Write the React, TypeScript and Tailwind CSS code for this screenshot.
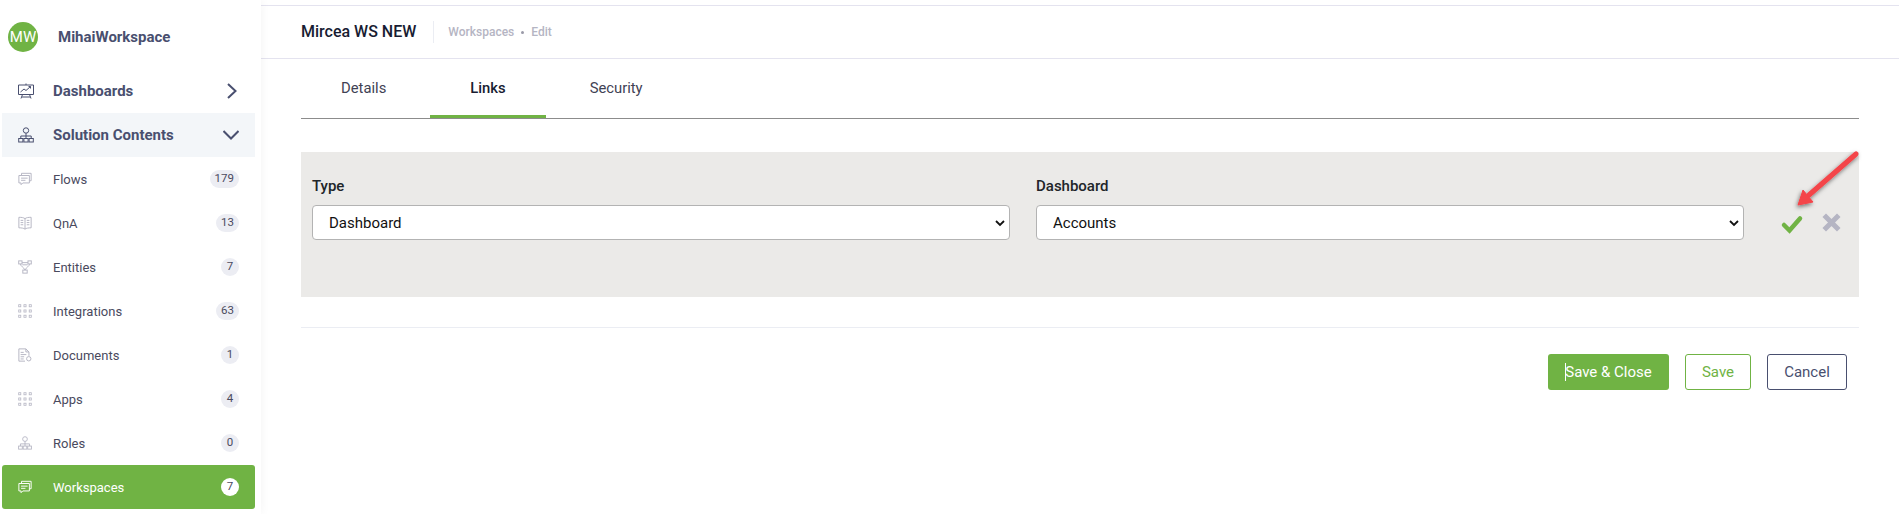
const S = 14;

function Msgs({ c }: { c: string }) {
  return (
    <svg width={S} height={S} viewBox="0 0 16 16" fill="none" stroke={c} strokeWidth="1.1">
      <path d="M4 3.5V1.5h11v8.5H13" />
      <path d="M1 4h12v8.5H5.5L3.5 14.5V12.5H1z" />
      <path d="M3.5 7h7.5M3.5 9.5h5" />
    </svg>
  );
}
function Book() {
  return (
    <svg width={S} height={S} viewBox="0 0 16 16" fill="none" stroke="#b5b5c3" strokeWidth="1.1">
      <path d="M8 3C6.5 1.8 4 1.5 1 1.5v12c3 0 5.500.4 7 1.500 1.500-1.100 4-1.500 7-1.500v-12C12 1.500 9.500 1.800 8 3zM8 3V15" />
      <path d="M3 5h3M3 7.500h3M3 10h3M10 5h3M10 7.500h3M10 10h3" />
    </svg>
  );
}
function Ent() {
  return (
    <svg width={S} height={S} viewBox="0 0 16 16" fill="none" stroke="#b5b5c3" strokeWidth="1.1">
      <rect x="0.8" y="1" width="3.8" height="3.500" />
      <rect x="11.400" y="1" width="3.800" height="3.500" />
      <rect x="5.500" y="11.500" width="5" height="3.500" />
      <path d="M4.600 3h6.800M2.800 4.500C3 7.500 6.500 8 8 11.500M13.200 4.500C13 7.500 9.500 8 8 11.500M5 5.500h6" />
    </svg>
  );
}
function Dots() {
  const p = [2, 8, 14];
  return (
    <svg width={S} height={S} viewBox="0 0 16 16" fill="none" stroke="#b5b5c3" strokeWidth="0.9">
      {p.map((y) => p.map((x) => <rect key={x + "-" + y} x={x - 1.2} y={y - 1.2} width="2.400" height="2.400" />))}
    </svg>
  );
}
function Doc() {
  return (
    <svg width={S} height={S} viewBox="0 0 16 16" fill="none" stroke="#b5b5c3" strokeWidth="1.100">
      <path d="M8 15H1V1h8l3.500 3.500V9" />
      <path d="M9 1v3.500h3.500M3 5h3.500M3 7.500h6.500M3 10h4M3 12.500h3.500" />
      <circle cx="12.300" cy="12.300" r="2.500" />
    </svg>
  );
}
function Tree({ c, w }: { c: string; w: number }) {
  return (
    <svg width={w} height={w} viewBox="0 0 16 16" fill="none" stroke={c} strokeWidth="1">
      <circle cx="8" cy="3.500" r="2.700" />
      <path d="M8 6.200V11.500M2.800 11.500V9h10.400v2.500" />
      <rect x="0.700" y="11.500" width="4.200" height="3.500" />
      <rect x="5.900" y="11.500" width="4.200" height="3.500" />
      <rect x="11.100" y="11.500" width="4.200" height="3.500" />
    </svg>
  );
}
function Board() {
  return (
    <svg width="16" height="16" viewBox="0 0 16 16" fill="none" stroke="#494f6f" strokeWidth="1">
      <path d="M8 .5V2M.5 2h15v9.500H.5zM4.500 11.500 3 15.500M11.500 11.500 13 15.500M4 14h8" />
      <path d="M2.500 9 6 6l2 1.500 4.500-4M10.500 3.500h2v2" />
    </svg>
  );
}

const items = [
  { label: "Flows", count: "179", icon: <Msgs c="#b5b5c3" /> },
  { label: "QnA", count: "13", icon: <Book /> },
  { label: "Entities", count: "7", icon: <Ent /> },
  { label: "Integrations", count: "63", icon: <Dots /> },
  { label: "Documents", count: "1", icon: <Doc /> },
  { label: "Apps", count: "4", icon: <Dots /> },
  { label: "Roles", count: "0", icon: <Tree c="#b5b5c3" w={14} /> },
];

function Badge({ n, active }: { n: string; active?: boolean }) {
  return (
    <span
      className={
        "h-[18px] min-w-[18px] px-[5px] rounded-full flex items-center justify-center text-[11.5px] text-[#4a4a5e] " +
        (active ? "bg-white" : "bg-[#ecedf3]")
      }
    >
      {n}
    </span>
  );
}

function Row({ icon, label, count, active }: { icon: React.ReactNode; label: string; count: string; active?: boolean }) {
  return (
    <div
      className={
        "h-[44px] ml-[2px] w-[253px] flex items-center pl-[16px] pr-[16px] rounded-[3px] " +
        (active ? "bg-[#70b344] text-white" : "text-[#4a4a5e]")
      }
    >
      <span className="w-[35px] flex items-center shrink-0">{icon}</span>
      <span className="flex-1 text-[13px] pt-[1px]">{label}</span>
      <Badge n={count} active={active} />
    </div>
  );
}

function Tab({ label, active }: { label: string; active?: boolean }) {
  return (
    <div
      className={
        "h-[59px] px-[40px] mr-[4px] flex items-center text-[14.8px] border-b-[3px] -mb-[1px] pt-[3px] " +
        (active ? "border-[#70b344] font-medium text-[#181c32]" : "border-transparent text-[#3f4254]")
      }
    >
      {label}
    </div>
  );
}

function Field({ label, value, opts, w }: { label: string; value: string; opts: string[]; w: string }) {
  return (
    <div className={w + " shrink-0"}>
      <div className="text-[15px] font-medium text-[#212529] h-[21px] leading-[21px] mb-[8px]">{label}</div>
      <div className="relative">
        <select
          defaultValue={value}
          className="appearance-none w-full h-[35px] bg-white border border-[#b3b3b3] rounded-[4px] pl-[16px] pr-[4px] pt-[2px] text-[15px] text-[#111] outline-none"
        >
          {opts.map((o) => (
            <option key={o}>{o}</option>
          ))}
        </select>
        <svg className="absolute right-[5px] top-[15px] pointer-events-none" width="10" height="7" viewBox="0 0 10 7" fill="none" stroke="#111" strokeWidth="1.800">
          <path d="M1 1l4 4 4-4" />
        </svg>
      </div>
    </div>
  );
}

export default function App() {
  return (
    <div className="w-[1899px] h-[514px] overflow-hidden flex bg-white font-['Roboto',sans-serif] relative">
      <aside className="w-[261px] shrink-0 bg-white shadow-[0_0_10px_rgba(0,0,0,0.05)] z-10">
        <div className="h-[69px] flex items-start pt-[22px] pl-[8px]">
          <div className="w-[30px] h-[30px] rounded-full bg-[#70b344] text-white text-[15px] flex items-center justify-center">
            MW
          </div>
          <div className="ml-[20px] h-[30px] flex items-center text-[15px] font-bold text-[#494f6f]">MihaiWorkspace</div>
        </div>
        <div className="h-[44px] ml-[2px] w-[253px] flex items-center pl-[16px] pr-[16px] text-[#494f6f]">
          <span className="w-[35px] shrink-0 flex items-center">
            <Board />
          </span>
          <span className="flex-1 text-[15px] font-bold">Dashboards</span>
          <svg width="12" height="16" viewBox="0 0 12 16" fill="none" stroke="#494f6f" strokeWidth="2" className="mr-[1px]">
            <path d="M2 1 9.500 8 2 15" />
          </svg>
        </div>
        <div className="h-[44px] ml-[2px] w-[253px] flex items-center pl-[16px] pr-[16px] bg-[#f3f6f9] text-[#494f6f]">
          <span className="w-[35px] shrink-0 flex items-center">
            <Tree c="#494f6f" w={16} />
          </span>
          <span className="flex-1 text-[15px] font-bold">Solution Contents</span>
          <svg width="16" height="12" viewBox="0 0 16 12" fill="none" stroke="#494f6f" strokeWidth="2">
            <path d="M.5 2 8 9.500 15.500 2" />
          </svg>
        </div>
        {items.map((i) => (
          <Row key={i.label} icon={i.icon} label={i.label} count={i.count} />
        ))}
        <Row icon={<Msgs c="#ffffff" />} label="Workspaces" count="7" active />
      </aside>

      <main className="flex-1 pt-[5px] min-w-0">
        <header className="h-[54px] border-y border-[#e4e3ef] flex items-center pl-[40px]">
          <span className="text-[16px] font-medium text-[#181c32]">Mircea WS NEW</span>
          <span className="w-px h-[22px] bg-[#ebedf3] ml-[17px] mr-[14px]" />
          <span className="text-[12px] font-medium text-[#b5b5c3]">Workspaces</span>
          <span className="w-[3px] h-[3px] rounded-full bg-[#9a9aa8] mx-[7px]" />
          <span className="text-[12px] font-medium text-[#b5b5c3]">Edit</span>
        </header>
        <div className="px-[40px]">
          <nav className="flex border-b border-[#8c8c8c] h-[60px]">
            <Tab label="Details" />
            <Tab label="Links" active />
            <Tab label="Security" />
          </nav>
          <section className="mt-[33px] h-[145px] bg-[#ebeae8] pl-[11px] pt-[24px] flex">
            <Field label="Type" value="Dashboard" opts={["Dashboard"]} w="w-[698px]" />
            <div className="w-[26px] shrink-0" />
            <Field label="Dashboard" value="Accounts" opts={["Accounts"]} w="w-[708px]" />
            <div className="flex items-center h-[35px] mt-[29px] ml-[36px] gap-[18px]">
              <svg width="24" height="20" viewBox="0 0 24 20" fill="none" stroke="#70b344" strokeWidth="4.500" strokeLinecap="round" className="mt-[2px]">
                <path d="M4 11l5.500 5.500L20 4.500" />
              </svg>
              <svg width="19" height="19" viewBox="0 0 19 19" fill="none" stroke="#b5b5c3" strokeWidth="5" strokeLinecap="square">
                <path d="M4 4l11 11M15 4 4 15" />
              </svg>
            </div>
          </section>
          <div className="mt-[30px] h-px bg-[#ebedf3]" />
          <div className="mt-[26px] flex justify-end pr-[12px] gap-[16px]">
            <button className="relative w-[121px] h-[36px] rounded-[3px] bg-[#70b344] text-white text-[15px]">
              <span className="absolute left-[17px] top-[9px] w-px h-[18px] bg-white" />
              Save &amp; Close
            </button>
            <button className="w-[66px] h-[36px] rounded-[3px] border border-[#70b344] text-[#70b344] text-[15px]">Save</button>
            <button className="w-[80px] h-[36px] rounded-[3px] border border-[#494f6f] text-[#494f6f] text-[15px]">Cancel</button>
          </div>
        </div>
      </main>

      <svg className="absolute left-[1790px] top-[145px]" width="80" height="72" viewBox="0 0 80 72" fill="none">
        <defs>
          <filter id="s" x="-30%" y="-30%" width="160%" height="160%">
            <feDropShadow dx="-1" dy="2" stdDeviation="2" floodColor="#000" floodOpacity="0.5" />
          </filter>
        </defs>
        <g filter="url(#s)">
          <path d="M66 9 19 50" stroke="#f44449" strokeWidth="5" strokeLinecap="round" />
          <path d="M8 60 13 45 23 57z" fill="#f44449" stroke="#f44449" strokeWidth="1" />
        </g>
      </svg>
    </div>
  );
}
